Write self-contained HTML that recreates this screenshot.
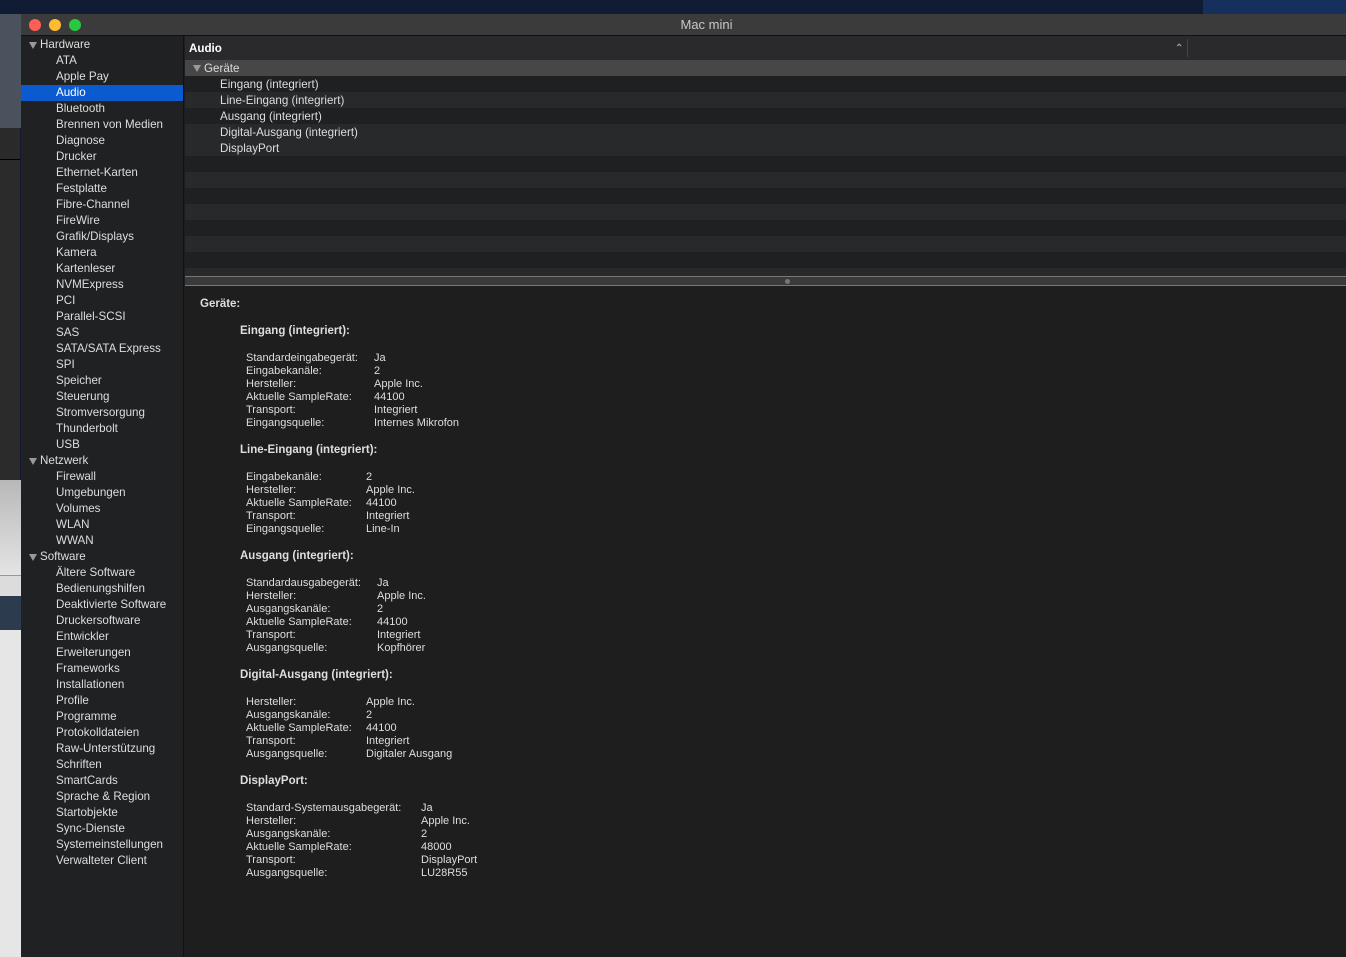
<!DOCTYPE html>
<html><head><meta charset="utf-8"><style>
*{margin:0;padding:0;box-sizing:border-box}
body{width:1346px;height:957px;overflow:hidden;background:#0f1c33;font-family:"Liberation Sans",sans-serif;font-size:11px;color:#dedede;position:relative}
.abs{position:absolute}
#win{left:21px;top:14px;width:1325px;height:943px;background:#1e1e1e}
#title{left:0;top:0;width:1325px;height:22px;background:#3b3b3b;border-bottom:1px solid #111;text-align:center;line-height:22px;font-size:13px;color:#c8c8c8;padding-left:46px}
.dot{top:5px;width:12px;height:12px;border-radius:50%}
#side{left:0;top:22px;width:163px;height:921px;background:#202123;border-right:1px solid #111;padding-top:1px;font-size:11.6px}
.si{height:16px;line-height:16px;padding-left:35px;white-space:nowrap}
.sh{padding-left:19px;position:relative}
.sh:before{content:"";position:absolute;left:8px;top:5px;border-left:4px solid transparent;border-right:4px solid transparent;border-top:7px solid #999}
.sel{background:#0a5bd0;color:#fff}
#main{left:164px;top:22px;width:1161px;height:921px;background:#1e1e1e;font-size:11.6px}
.row{height:16px;line-height:16px;padding-top:1px;padding-left:35px}
.d{position:absolute;white-space:pre;line-height:13px}
b{font-weight:bold;font-size:11.5px}
</style></head><body>
<div class="abs" style="left:0;top:0;width:21px;height:14px;background:#0f1c33"></div>
<div class="abs" style="left:0;top:14px;width:21px;height:114px;background:#4a525e"></div>
<div class="abs" style="left:0;top:128px;width:20px;height:32px;background:#2a2a2a;border-bottom:1px solid #000"></div>
<div class="abs" style="left:0;top:160px;width:20px;height:320px;background:#2b2b2b"></div>
<div class="abs" style="left:0;top:480px;width:21px;height:95px;background:linear-gradient(#b8b8b8,#e4e4e4)"></div>
<div class="abs" style="left:0;top:575px;width:21px;height:21px;background:#dcdcdc;border-top:1px solid #999"></div>
<div class="abs" style="left:0;top:596px;width:21px;height:34px;background:#2c3b4d"></div>
<div class="abs" style="left:0;top:630px;width:21px;height:327px;background:#e6e6e6"></div>
<div class="abs" style="left:1203px;top:0;width:143px;height:14px;background:#16305e"></div>
<div id="win" class="abs">
 <div id="title" class="abs">Mac mini</div>
 <div class="abs dot" style="left:8px;background:#fd5f57"></div>
 <div class="abs dot" style="left:28px;background:#febc2e"></div>
 <div class="abs dot" style="left:48px;background:#28c840"></div>
 <div id="side" class="abs">
  <div class="si sh">Hardware</div>
  <div class="si">ATA</div><div class="si">Apple Pay</div><div class="si sel">Audio</div><div class="si">Bluetooth</div><div class="si">Brennen von Medien</div><div class="si">Diagnose</div><div class="si">Drucker</div><div class="si">Ethernet-Karten</div><div class="si">Festplatte</div><div class="si">Fibre-Channel</div><div class="si">FireWire</div><div class="si">Grafik/Displays</div><div class="si">Kamera</div><div class="si">Kartenleser</div><div class="si">NVMExpress</div><div class="si">PCI</div><div class="si">Parallel-SCSI</div><div class="si">SAS</div><div class="si">SATA/SATA Express</div><div class="si">SPI</div><div class="si">Speicher</div><div class="si">Steuerung</div><div class="si">Stromversorgung</div><div class="si">Thunderbolt</div><div class="si">USB</div>
  <div class="si sh">Netzwerk</div>
  <div class="si">Firewall</div><div class="si">Umgebungen</div><div class="si">Volumes</div><div class="si">WLAN</div><div class="si">WWAN</div>
  <div class="si sh">Software</div>
  <div class="si">Ältere Software</div><div class="si">Bedienungshilfen</div><div class="si">Deaktivierte Software</div><div class="si">Druckersoftware</div><div class="si">Entwickler</div><div class="si">Erweiterungen</div><div class="si">Frameworks</div><div class="si">Installationen</div><div class="si">Profile</div><div class="si">Programme</div><div class="si">Protokolldateien</div><div class="si">Raw-Unterstützung</div><div class="si">Schriften</div><div class="si">SmartCards</div><div class="si">Sprache &amp; Region</div><div class="si">Startobjekte</div><div class="si">Sync-Dienste</div><div class="si">Systemeinstellungen</div><div class="si">Verwalteter Client</div>
 </div>
 <div id="main" class="abs">
  <div style="height:24px;line-height:24px;padding-top:1px;background:#2a2a2d;padding-left:4px;font-weight:bold;color:#fff;position:relative">Audio<span class="abs" style="left:990px;top:1px;color:#999;font-size:10px">&#8963;</span><span class="abs" style="left:1002px;top:3px;width:1px;height:18px;background:#444"></span></div>
  <div class="row sh" style="background:#474747;padding-left:19px">Geräte</div>
  <div class="row" style="background:#1f2022">Eingang (integriert)</div>
  <div class="row" style="background:#28292b">Line-Eingang (integriert)</div>
  <div class="row" style="background:#1f2022">Ausgang (integriert)</div>
  <div class="row" style="background:#28292b">Digital-Ausgang (integriert)</div>
  <div class="row" style="background:#28292b">DisplayPort</div>
  <div class="row" style="background:#1f2022"></div>
  <div class="row" style="background:#28292b"></div>
  <div class="row" style="background:#1f2022"></div>
  <div class="row" style="background:#28292b"></div>
  <div class="row" style="background:#1f2022"></div>
  <div class="row" style="background:#28292b"></div>
  <div class="row" style="background:#1f2022"></div>
  <div class="row" style="background:#28292b;height:8px"></div>
  <div style="height:10px;background:#3a3a3a;border-top:1px solid #777;border-bottom:1px solid #777;position:relative"><span class="abs" style="left:600px;top:2px;width:5px;height:5px;border-radius:50%;background:#777"></span></div>
 </div>
</div>
<div class="d" style="left:200px;top:298px"><b>Geräte:</b></div>
<div class="d" style="left:240px;top:325px"><b>Eingang (integriert):</b></div>
<div class="d" style="left:246px;top:352px">Standardeingabegerät:
Eingabekanäle:
Hersteller:
Aktuelle SampleRate:
Transport:
Eingangsquelle:</div>
<div class="d" style="left:374px;top:352px">Ja
2
Apple Inc.
44100
Integriert
Internes Mikrofon</div>
<div class="d" style="left:240px;top:444px"><b>Line-Eingang (integriert):</b></div>
<div class="d" style="left:246px;top:471px">Eingabekanäle:
Hersteller:
Aktuelle SampleRate:
Transport:
Eingangsquelle:</div>
<div class="d" style="left:366px;top:471px">2
Apple Inc.
44100
Integriert
Line-In</div>
<div class="d" style="left:240px;top:550px"><b>Ausgang (integriert):</b></div>
<div class="d" style="left:246px;top:577px">Standardausgabegerät:
Hersteller:
Ausgangskanäle:
Aktuelle SampleRate:
Transport:
Ausgangsquelle:</div>
<div class="d" style="left:377px;top:577px">Ja
Apple Inc.
2
44100
Integriert
Kopfhörer</div>
<div class="d" style="left:240px;top:669px"><b>Digital-Ausgang (integriert):</b></div>
<div class="d" style="left:246px;top:696px">Hersteller:
Ausgangskanäle:
Aktuelle SampleRate:
Transport:
Ausgangsquelle:</div>
<div class="d" style="left:366px;top:696px">Apple Inc.
2
44100
Integriert
Digitaler Ausgang</div>
<div class="d" style="left:240px;top:775px"><b>DisplayPort:</b></div>
<div class="d" style="left:246px;top:802px">Standard-Systemausgabegerät:
Hersteller:
Ausgangskanäle:
Aktuelle SampleRate:
Transport:
Ausgangsquelle:</div>
<div class="d" style="left:421px;top:802px">Ja
Apple Inc.
2
48000
DisplayPort
LU28R55</div>
</body></html>
